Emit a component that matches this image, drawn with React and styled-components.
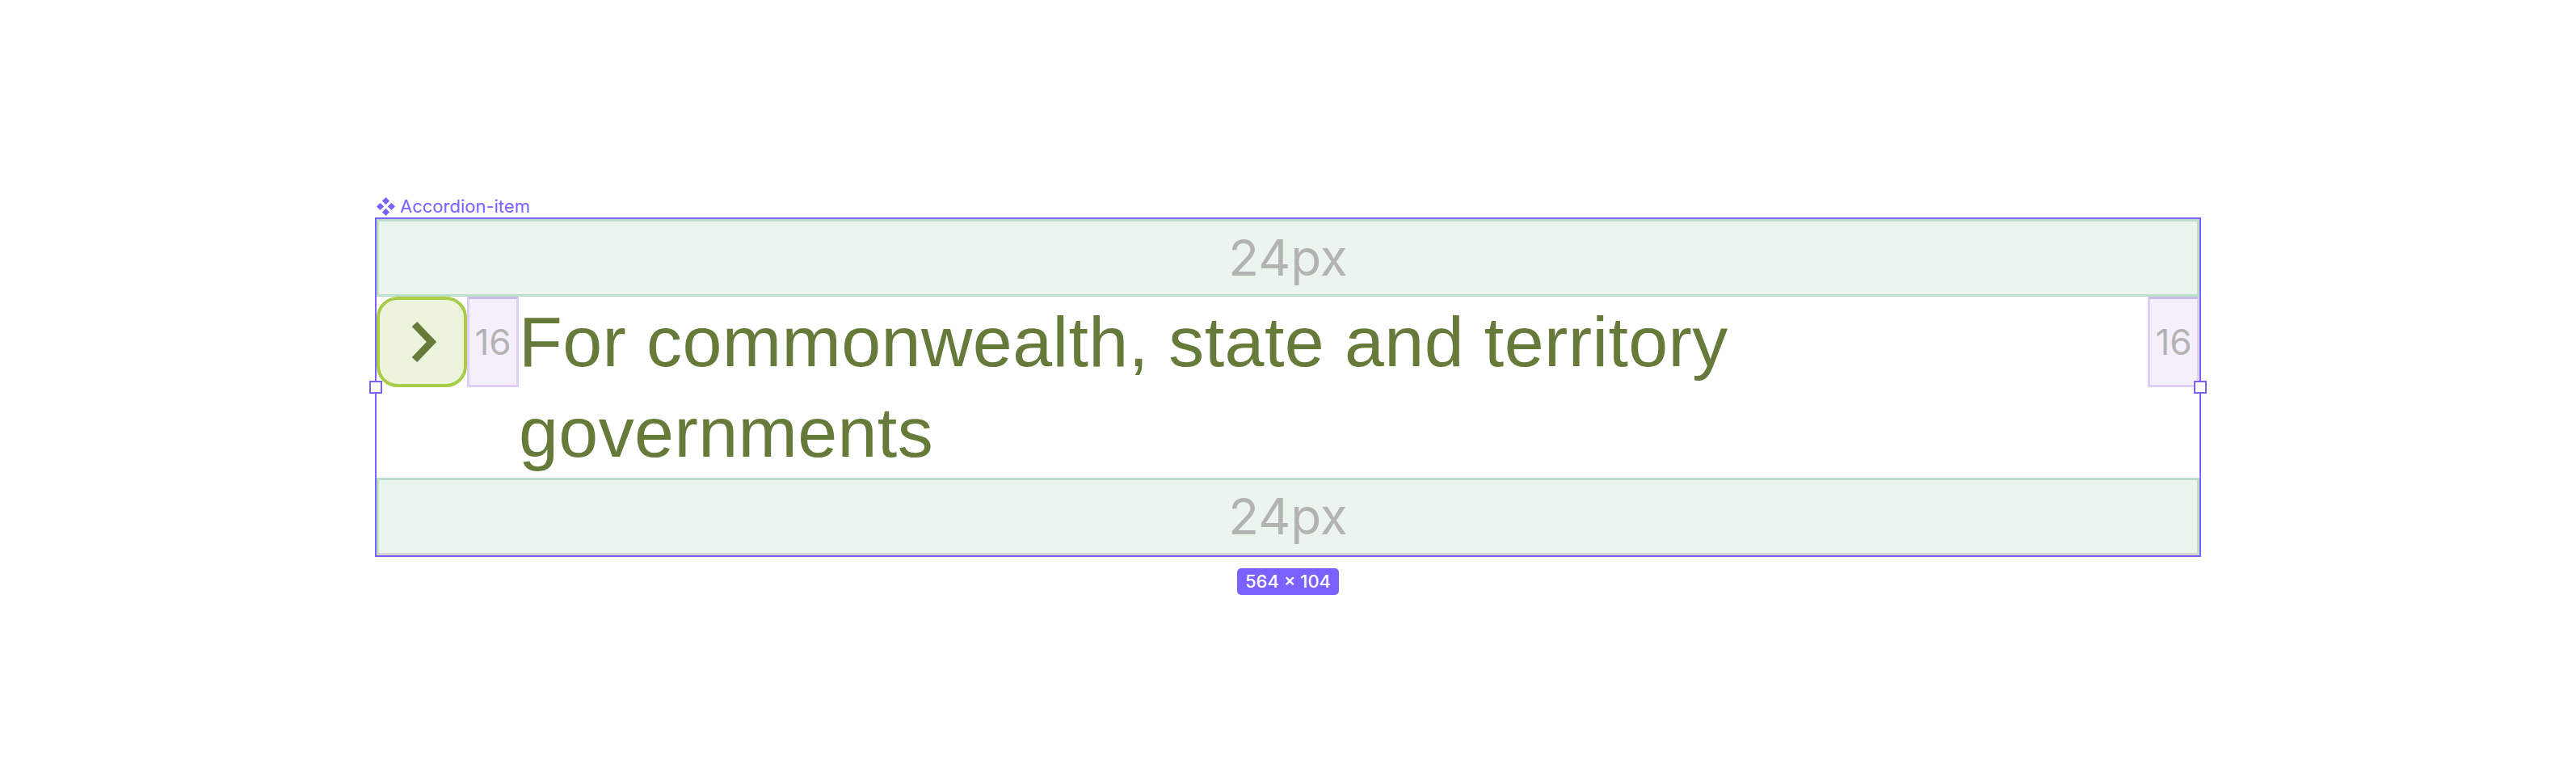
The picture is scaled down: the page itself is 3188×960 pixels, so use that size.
import React from 'react'
import styled, { createGlobalStyle } from 'styled-components';

const GlobalStyle = createGlobalStyle`
  html, body {
    margin: 0;
    padding: 0;
    background: #ffffff;
  }
  body {
    font-family: Inter, "Liberation Sans", sans-serif;
  }
`

const ComponentIcon = () => (
  <svg width="23" height="23" viewBox="0 0 22 22">
    <path d="M11 0 L15.4 4.4 L11 8.8 L6.6 4.4 Z" fill="#7b61ff" />
    <path d="M4.4 6.6 L8.8 11 L4.4 15.4 L0 11 Z" fill="#7b61ff" />
    <path d="M17.6 6.6 L22 11 L17.6 15.4 L13.2 11 Z" fill="#7b61ff" />
    <path d="M11 13.2 L15.4 17.6 L11 22 L6.6 17.6 Z" fill="#7b61ff" />
  </svg>
)

const Chevron = () => (
  <svg width="30" height="48" viewBox="0 0 30 48" style={{ overflow: 'visible' }}>
    <polyline points="4,2 25,24 4,46" fill="none" stroke="#667a3a" strokeWidth="9" strokeLinejoin="miter" />
  </svg>
)

const App = () => {
  return (
    <Stage>
      <GlobalStyle />
      <Label>
        <ComponentIcon />
        <span>Accordion-item</span>
      </Label>
      <Frame>
        <Handle side="left" />
        <Handle side="right" />
        <Padding>24px</Padding>
        <Row>
          <ToggleButton aria-label="Expand">
            <Chevron />
          </ToggleButton>
          <Gap>16</Gap>
          <Title>For commonwealth, state and territory governments</Title>
          <Gap>16</Gap>
        </Row>
        <Padding bottom>24px</Padding>
      </Frame>
      <SizeBadge>564 × 104</SizeBadge>
    </Stage>
  )
}
export default App;

const Stage = styled.div`
  display: flex;
  flex-direction: column;
  align-items: flex-start;
  padding: 241px 0 0 464px;
  width: 2260px;
`

const Label = styled.div`
  display: flex;
  align-items: center;
  gap: 6px;
  height: 28px;
  margin: 0 0 0 2px;
  color: #7b61ff;
  font-family: Inter, sans-serif;
  font-size: 22px;
  line-height: 28px;
  svg {
    flex-shrink: 0;
  }
`

const Frame = styled.div`
  position: relative;
  width: 2256px;
  border: 2px solid #7b61ff;
  display: flex;
  flex-direction: column;
`

const Handle = styled.div`
  position: absolute;
  top: 50%;
  ${p => p.side === 'left' ? 'left: -9px;' : 'right: -9px;'}
  width: 16px;
  height: 16px;
  margin-top: -8px;
  box-sizing: border-box;
  background: #ffffff;
  border: 2px solid #7b61ff;
  z-index: 2;
`

const Padding = styled.div`
  box-sizing: border-box;
  height: 96px;
  background: #ebf5ee;
  border: 3px solid #bbdfca;
  ${p => p.bottom && 'border-bottom-color: #d4d4d4;'}
  display: flex;
  align-items: center;
  justify-content: center;
  color: #b3b3b3;
  font-family: Inter, sans-serif;
  font-size: 62px;
  line-height: 1;
`

const Row = styled.div`
  display: flex;
  align-items: flex-start;
  height: 224px;
`

const ToggleButton = styled.button`
  flex-shrink: 0;
  box-sizing: border-box;
  width: 112px;
  height: 112px;
  padding: 0 0 0 4px;
  margin: 0;
  background: #ecf5dc;
  border: 4px solid #a9cd48;
  border-radius: 26px;
  display: flex;
  align-items: center;
  justify-content: center;
  cursor: pointer;
`

const Gap = styled.div`
  flex-shrink: 0;
  box-sizing: border-box;
  width: 64px;
  height: 112px;
  background: #f5effc;
  border: 3px solid #e2cdf6;
  border-top-color: #c9bde6;
  display: flex;
  align-items: center;
  justify-content: center;
  color: #b3b3b3;
  font-family: Inter, sans-serif;
  font-size: 44px;
  line-height: 1;
`

const Title = styled.h3`
  flex: 1;
  margin: 0;
  color: #667a3a;
  font-family: "Liberation Sans", Arial, sans-serif;
  font-weight: 400;
  font-size: 88px;
  line-height: 112px;
  letter-spacing: 0.4px;
`

const SizeBadge = styled.div`
  align-self: center;
  margin-top: 14px;
  padding: 0 10px;
  height: 33px;
  border-radius: 5px;
  background: #7b61ff;
  color: #ffffff;
  font-family: Inter, sans-serif;
  font-size: 22px;
  font-weight: 500;
  line-height: 33px;
  white-space: nowrap;
`
